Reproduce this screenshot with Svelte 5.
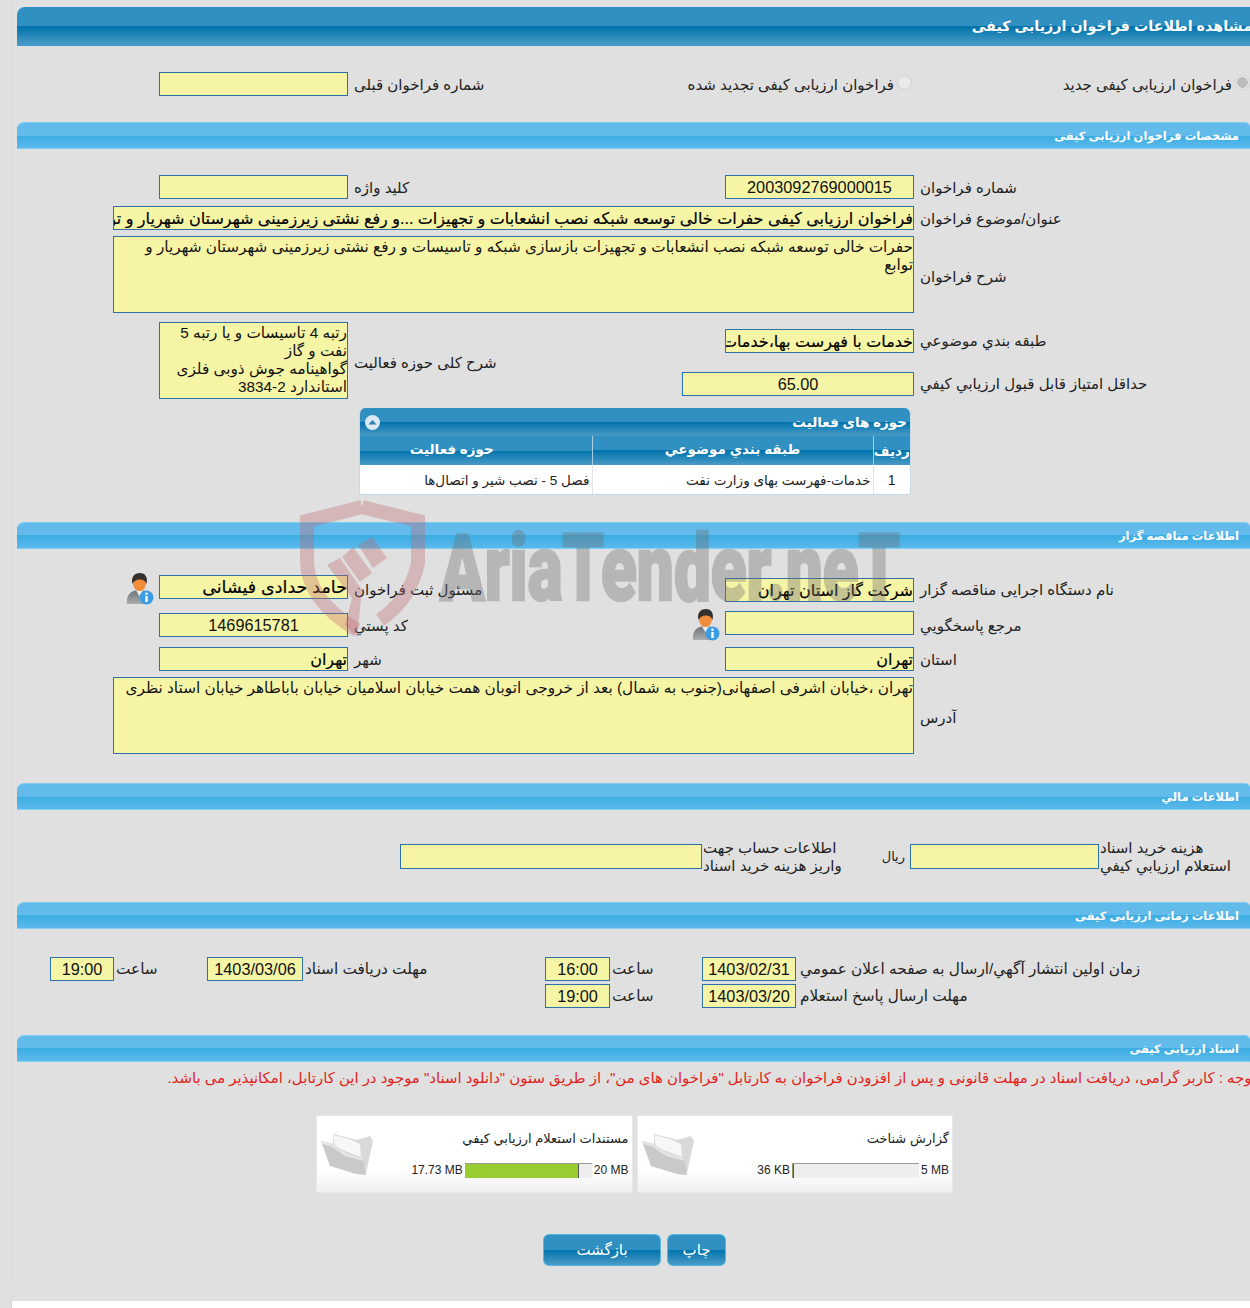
<script>
  // tender detail page: read only, so the values just live here
  const activities = [
    { row: '1', subject: 'خدمات-فهرست بهای وزارت نفت', field: 'فصل 5 - نصب شیر و اتصال‌ها' }
  ];
  const docs = [
    { title: 'گزارش شناخت', used: '36 KB', limit: '5 MB', pct: 1, color: '#8a9a5b' },
    { title: 'مستندات استعلام ارزيابي كيفي', used: '17.73 MB', limit: '20 MB', pct: 89, color: '#9acd32' }
  ];
</script>

{#snippet person()}
  <svg class="person" viewBox="0 0 28 32" aria-hidden="true">
    <defs>
      <linearGradient id="suit" x1="0" y1="0" x2="0" y2="1">
        <stop offset="0" stop-color="#6f7478" />
        <stop offset="1" stop-color="#a9adb0" />
      </linearGradient>
    </defs>
    <path d="M1 31C0 23 4 19 9 17.500L18 17.500C22 19 24 23 24 31Z" fill="url(#suit)" />
    <path d="M10 17.500L17 17.500L14 24Z" fill="#eceff1" />
    <ellipse cx="13.500" cy="10.500" rx="6.500" ry="7.500" fill="#f28c3a" />
    <path d="M6.500 11C4.500 3 9.500 0 14 0C19.500 0 22 4 20.500 11C19 7.500 17 6.500 13.500 6.500C10 6.500 8 8 6.500 11Z" fill="#33302e" />
    <circle cx="20.500" cy="24.500" r="7" fill="#3d9de2" />
    <circle cx="20.500" cy="20.800" r="1.300" fill="#fff" />
    <rect x="19.300" y="23" width="2.400" height="6" fill="#fff" />
  </svg>
{/snippet}

{#snippet folder()}
  <svg class="folder" viewBox="4 18 60 50" aria-hidden="true">
    <path d="M20 23L37 27L43 29L57 25L60 30L53 62L20 40Z" fill="#d9d9d9" />
    <path d="M20 24L36 28L47 33L48 46L22 36Z" fill="#f7f7f7" />
    <path d="M8 30L20 33L33 42L50 47L53 64L43 63L17 55Z" fill="#c9c9c9" />
    <path d="M8 30L20 33L33 42L50 47L50.500 50L32 45L19 36L9 33Z" fill="#e3e3e3" />
  </svg>
{/snippet}

<div class="page">
  <div class="panel">
    <h1 class="head"><span>مشاهده اطلاعات فراخوان ارزیابی کیفی</span></h1>

    <div class="form top">
      <input class="f c3" readonly value="" />
      <label class="lab c4 lo">شماره فراخوان قبلی</label>
      <div class="radio c56"><i class="dot"></i><span>فراخوان ارزیابی کیفی تجدید شده</span></div>
      <div class="radio c7"><i class="dot on"></i><span>فراخوان ارزیابی کیفی جدید</span></div>
    </div>

    <h2 class="bar">مشخصات فراخوان ارزیابی کیفی</h2>

    <div class="form spec">
      <input class="f c3" readonly value="" />
      <label class="lab c4 lo">کلید واژه</label>
      <input class="f c6 num" readonly value="2003092769000015" />
      <label class="lab c7 lo">شماره فراخوان</label>

      <input class="f wide strong" dir="rtl" readonly value="فراخوان ارزیابی کیفی حفرات خالی توسعه شبکه نصب انشعابات و تجهیزات ...و رفع نشتی زیرزمینی شهرستان شهریار و توابع" />
      <label class="lab c7 lo">عنوان/موضوع فراخوان</label>

      <textarea class="f wide area" dir="rtl" readonly>حفرات خالی توسعه شبکه نصب انشعابات و تجهیزات بازسازی شبکه و تاسیسات و رفع نشتی زیرزمینی شهرستان شهریار و توابع</textarea>
      <label class="lab c7">شرح فراخوان</label>
    </div>

    <div class="form scope">
      <textarea class="f c3 area span" dir="rtl" readonly>رتبه 4 تاسیسات و یا رتبه 5
نفت و گاز
گواهینامه جوش ذوبی فلزی
استاندارد 2-3834</textarea>
      <label class="lab c4 span">شرح کلی حوزه فعالیت</label>
      <input class="f c6 r2 strong" dir="rtl" readonly value="خدمات با فهرست بها،خدمات مشاوره" />
      <label class="lab c7 r2">طبقه بندي موضوعي</label>
      <input class="f c56 r4 num" readonly value="65.00" />
      <label class="lab c7 r4">حداقل امتياز قابل قبول ارزيابي كيفي</label>
    </div>

    <section class="grid-box">
      <div class="grid-title">
        <span>حوزه های فعالیت</span>
        <svg class="toggle" viewBox="0 0 15 15" aria-hidden="true">
          <circle cx="7.500" cy="7.500" r="7.500" fill="#dbe9f3" />
          <path d="M3.500 9.500L7.500 5L11.500 9.500Z" fill="#2b7fb2" />
        </svg>
      </div>
      <table>
        <thead>
          <tr><th class="t1">ردیف</th><th class="t2">طبقه بندي موضوعي</th><th class="t3">حوزه فعالیت</th></tr>
        </thead>
        <tbody>
          {#each activities as a}
            <tr><td class="n">{a.row}</td><td>{a.subject}</td><td>{a.field}</td></tr>
          {/each}
        </tbody>
      </table>
    </section>

    <h2 class="bar org">اطلاعات مناقصه گزار</h2>

    <div class="form owner">
      <div class="ic c2">{@render person()}</div>
      <input class="f c3 strong big" dir="rtl" readonly value="حامد حدادی فیشانی" />
      <label class="lab c4 dn">مسئول ثبت فراخوان</label>
      <input class="f c6 strong dn" dir="rtl" readonly value="شرکت گاز استان تهران" />
      <label class="lab c7 dn">نام دستگاه اجرایی مناقصه گزار</label>

      <input class="f c3 num dn1" readonly value="1469615781" />
      <label class="lab c4 dn1 lo">کد پستي</label>
      <div class="ic c5">{@render person()}</div>
      <input class="f c6" readonly value="" />
      <label class="lab c7 dn">مرجع پاسخگويي</label>

      <input class="f c3 strong" dir="rtl" readonly value="تهران" />
      <label class="lab c4 lo">شهر</label>
      <input class="f c6 strong" dir="rtl" readonly value="تهران" />
      <label class="lab c7 lo">استان</label>

      <textarea class="f wide area" dir="rtl" readonly>تهران ،خیابان اشرفی اصفهانی(جنوب به شمال) بعد از خروجی اتوبان همت خیابان اسلامیان خیابان باباطاهر خیابان استاد نظری</textarea>
      <label class="lab c7">آدرس</label>
    </div>

    <h2 class="bar money">اطلاعات مالي</h2>

    <div class="pay">
      <input class="f pay-a" readonly value="" />
      <label class="lab tight">اطلاعات حساب جهت<br />واریز هزینه خرید اسناد</label>
      <span class="rial">ریال</span>
      <input class="f" readonly value="" />
      <label class="lab tight">هزینه خرید اسناد<br />استعلام ارزيابي كيفي</label>
    </div>

    <h2 class="bar">اطلاعات زمانی ارزیابی کیفی</h2>

    <div class="dates">
      <input class="f num d1" readonly value="19:00" />
      <label class="lab mini d2">ساعت</label>
      <input class="f num d3" readonly value="1403/03/06" />
      <label class="lab mini d4">مهلت دریافت اسناد</label>
      <input class="f num d5" readonly value="16:00" />
      <label class="lab mini d6">ساعت</label>
      <input class="f num d7" readonly value="1403/02/31" />
      <label class="lab mini d8">زمان اولین انتشار آگهي/ارسال به صفحه اعلان عمومي</label>

      <input class="f num d5" readonly value="19:00" />
      <label class="lab mini d6">ساعت</label>
      <input class="f num d7" readonly value="1403/03/20" />
      <label class="lab mini d8">مهلت ارسال پاسخ استعلام</label>
    </div>

    <h2 class="bar">اسناد ارزیابی کیفی</h2>

    <p class="notice">توجه : کاربر گرامی، دریافت اسناد در مهلت قانونی و پس از افزودن فراخوان به کارتابل "فراخوان های من"، از طریق ستون "دانلود اسناد" موجود در این کارتابل، امکانپذیر می باشد.</p>

    <div class="cards">
      {#each docs as d}
        <div class="card">
          <div class="card-body">
            <div class="card-title">{d.title}</div>
            <div class="meter">
              <span>{d.limit}</span>
              <div class="track"><div class="fill" style="width: {d.pct}%; background: {d.color}"></div></div>
              <span>{d.used}</span>
            </div>
          </div>
          {@render folder()}
        </div>
      {/each}
    </div>

    <div class="actions">
      <button class="btn wide-btn">بازگشت</button>
      <button class="btn">چاپ</button>
    </div>
  </div>

  <svg class="mark" viewBox="0 0 1250 1308" aria-hidden="true">
    <path d="M362 507L418 521L418 563Q410 600 380 620M357 630Q307 600 307 560L307 521L362 507" fill="none" stroke="#c0686c" stroke-opacity="0.35" stroke-width="14" />
    <path d="M358 545L372 537L387 558L373 568ZM342 557L353 547L372 573L360 582ZM327 565L340 558L362 590L357 637L345 625L352 598Z" fill="#c0686c" fill-opacity="0.35" />
    <text x="440" y="600" font-size="92" textLength="460" lengthAdjust="spacingAndGlyphs">AriaTender.neT</text>
  </svg>
</div>

<style>
  :global(body) {
    margin: 0;
    background: #e0e0e0;
  }
  .page {
    position: relative;
    width: 1250px;
    height: 1308px;
    overflow: hidden;
    font-family: "Liberation Sans", "DejaVu Sans", sans-serif;
    font-size: 15px;
    color: #222;
  }
  .panel {
    box-sizing: border-box;
    height: 1286px;
    margin-left: 10px;
    padding: 7px 0 0 6px;
    border-left: 1px solid #dbdbdb;
    border-bottom: 1px solid #dbdbdb;
  }
  .page::after {
    content: '';
    position: absolute;
    left: 11px;
    right: 0;
    top: 1301px;
    bottom: 0;
    background: #fff;
    border-left: 1px solid #d6d6d6;
  }
  .mark {
    position: absolute;
    inset: 0;
    width: 1250px;
    height: 1308px;
    pointer-events: none;
  }
  .mark text {
    font-family: Roboto, sans-serif;
    font-weight: 900;
    fill: #6e6e6e;
    stroke: #6e6e6e;
    stroke-width: 2.500px;
    opacity: 0.36;
  }

  .head {
    display: flex;
    justify-content: flex-end;
    box-sizing: border-box;
    height: 39px;
    margin: 0;
    overflow: hidden;
    direction: ltr;
    border-radius: 8px 0 0 0;
    border-top: 1px solid #2b8ec9;
    border-bottom: 1px solid #3f9ad0;
    background: linear-gradient(#2f90c1 0, #2f90c1 50%, #0073ac 50%, #4a9bc6 100%);
    color: #fff;
    font-size: 14.300px;
    font-weight: 700;
    line-height: 36px;
  }
  .head span {
    direction: rtl;
    white-space: nowrap;
    margin-right: -2px;
  }
  .bar {
    box-sizing: border-box;
    height: 27px;
    margin: 0;
    padding-right: 11px;
    direction: rtl;
    border-radius: 7px 5px 0 0;
    border-top: 1px solid #7dcdf2;
    border-bottom: 1px solid #7fd1f5;
    background: linear-gradient(#62bbeb 0, #62bbeb 50%, #3badE3 50%, #5bb9ea 100%);
    color: #fff;
    font-size: 11.500px;
    font-weight: 700;
    line-height: 26px;
  }

  .form {
    display: grid;
    grid-template-columns: 96px 46px 189px 334px 43px 189px 336px;
    align-items: start;
  }
  .top { margin-top: 26px; height: 50px; align-content: start; }
  .spec { margin-top: 26px; grid-template-rows: 31px 30px 77px; }
  .scope { margin-top: 9px; grid-template-rows: 7px 24px 19px 24px 3px; }
  .org { margin-top: 27px; }
  .owner { margin-top: 26px; grid-template-rows: 36px 36px 30px 77px; }
  .money { margin-top: 29px; }

  .c2 { grid-column: 2; }
  .c3 { grid-column: 3; }
  .c4 { grid-column: 4; }
  .c5 { grid-column: 5; }
  .c6 { grid-column: 6; }
  .c56 { grid-column: 5 / 7; }
  .c7 { grid-column: 7; }
  .wide { grid-column: 2 / 7; }
  .span { grid-row: 1 / -1; align-self: center; }
  .r2 { grid-row: 2; }
  .r4 { grid-row: 4; }
  .dn { margin-top: 3px; }
  .dn1 { margin-top: 2px; }

  .f {
    box-sizing: border-box;
    display: block;
    width: 100%;
    height: 24px;
    padding: 0;
    border: 1px solid #2a72a8;
    border-radius: 0;
    outline: none;
    background: #f6f5a5;
    color: #111;
    font: inherit;
    text-align: right;
    direction: rtl;
  }
  .strong { font-size: 16px; color: #000; -webkit-text-stroke: 0.2px #000; }
  .big { font-size: 17.500px; }
  .num { direction: ltr; text-align: center; font-size: 16.300px; }
  .area {
    height: 77px;
    padding-top: 1px;
    line-height: 18px;
    font-size: 15.300px;
    resize: none;
    overflow: hidden;
  }
  .lab {
    display: block;
    padding-left: 6px;
    direction: rtl;
    text-align: left;
    line-height: 24px;
    white-space: nowrap;
  }
  .lo { padding-top: 1px; }
  .area + .lab { line-height: 77px; padding-top: 2px; }
  .span.lab { line-height: 24px; padding-top: 4px; }

  .radio {
    display: flex;
    direction: rtl;
    gap: 3px;
    padding-top: 1px;
    line-height: 24px;
  }
  .c56.radio { margin-right: 2px; }
  .dot {
    box-sizing: border-box;
    flex: none;
    width: 15px;
    height: 15px;
    margin-top: 2px;
    border: 1px solid #cfcfcf;
    border-radius: 50%;
    background: #e9e9e9;
  }
  .dot.on { background: radial-gradient(#bcbcbc 0 55%, #ececec 62%); }

  .ic { display: flex; justify-content: flex-end; padding-right: 5px; margin-top: -2px; }
  .person { width: 28px; height: 32px; }

  .grid-box {
    box-sizing: border-box;
    width: 552px;
    height: 87px;
    margin: 9px 0 0 342px;
    direction: rtl;
    border: 1px solid #c6d9e6;
    border-top: 0;
    border-radius: 6px 6px 3px 3px;
    background: #fff;
    overflow: hidden;
  }
  .grid-title {
    display: flex;
    justify-content: space-between;
    align-items: center;
    height: 28px;
    padding: 0 3px 0 5px;
    background: linear-gradient(#2f90c1 0, #2f90c1 50%, #0073ac 50%, #4a9bc6 100%);
    color: #fff;
    font-size: 13.500px;
    font-weight: 700;
  }
  .toggle { width: 15px; height: 15px; }
  table {
    width: 100%;
    table-layout: fixed;
    border-collapse: collapse;
  }
  th {
    box-sizing: border-box;
    height: 29px;
    padding: 0;
    border-left: 1px solid #a8cfe4;
    background: linear-gradient(#2f90c1 0, #2f90c1 50%, #0073ac 50%, #4a9bc6 100%);
    color: #fff;
    font-size: 13.500px;
    font-weight: 700;
  }
  th:last-child { border-left: 0; }
  .t1 { width: 37px; }
  .t2 { width: 281px; padding-bottom: 3px; }
  .t3 { padding: 0 48px 3px 0; }
  td {
    box-sizing: border-box;
    height: 29px;
    padding: 1px 2px 0;
    border-left: 1px solid #e4e4e4;
    font-size: 13.500px;
    white-space: nowrap;
    overflow: hidden;
  }
  td:last-child { border-left: 0; }
  td.n { text-align: center; font-size: 14px; }

  .pay {
    display: grid;
    grid-template-columns: 302px 178px 30px 189px 1fr;
    align-items: center;
    height: 92px;
    margin-left: 383px;
  }
  .pay .f { height: 25px; }
  .tight { padding-left: 1px; line-height: 18px; margin-top: 2px; }
  .rial { padding-right: 5px; direction: rtl; font-size: 13px; }

  .dates {
    display: grid;
    grid-template-columns: 64px 93px 96px 242px 65px 92px 94px 1fr;
    grid-auto-rows: 27px;
    margin: 28px 0 0 33px;
    height: 78px;
  }
  .mini { padding-left: 2px; font-size: 15.300px; }
  .d1 { grid-column: 1; }
  .d2 { grid-column: 2; }
  .d3 { grid-column: 3; }
  .d4 { grid-column: 4; }
  .d5 { grid-column: 5; }
  .d6 { grid-column: 6; }
  .d7 { grid-column: 7; }
  .d8 { grid-column: 8; padding-left: 4px; }

  .notice {
    margin: 7px -6px 0 -40px;
    direction: rtl;
    color: #e2231a;
    font-size: 14.900px;
    line-height: 18px;
    white-space: nowrap;
  }
  .cards {
    display: flex;
    direction: rtl;
    gap: 4px;
    width: 637px;
    margin: 28px 0 0 299px;
  }
  .card {
    box-sizing: border-box;
    display: flex;
    flex: 1;
    align-items: center;
    height: 78px;
    padding-right: 3px;
    border: 1px solid #e8e8e8;
    background: linear-gradient(#fff 0, #fff 70%, #f0f0f0 100%);
  }
  .card-body { flex: 1; }
  .card-title { font-size: 13px; margin-bottom: 17px; }
  .meter {
    display: flex;
    align-items: center;
    gap: 2px;
    font-size: 12px;
  }
  .meter span { direction: ltr; }
  .track {
    width: 127px;
    height: 14px;
    border-top: 1px solid #9a9a9a;
    background: #eee;
    direction: ltr;
  }
  .fill {
    height: 100%;
    border-right: 1px solid #555;
  }
  .folder { width: 60px; height: 50px; flex: none; }

  .actions {
    display: flex;
    gap: 6px;
    margin: 41px 0 0 526px;
  }
  .btn {
    width: 59px;
    height: 32px;
    padding: 0;
    border: 1px solid #56b6e6;
    border-radius: 6px;
    background: linear-gradient(#2f90c1 0, #2f90c1 50%, #0073ac 50%, #4a9bc6 100%);
    color: #fff;
    font: inherit;
    font-size: 15px;
  }
  .wide-btn { width: 118px; }
</style>
